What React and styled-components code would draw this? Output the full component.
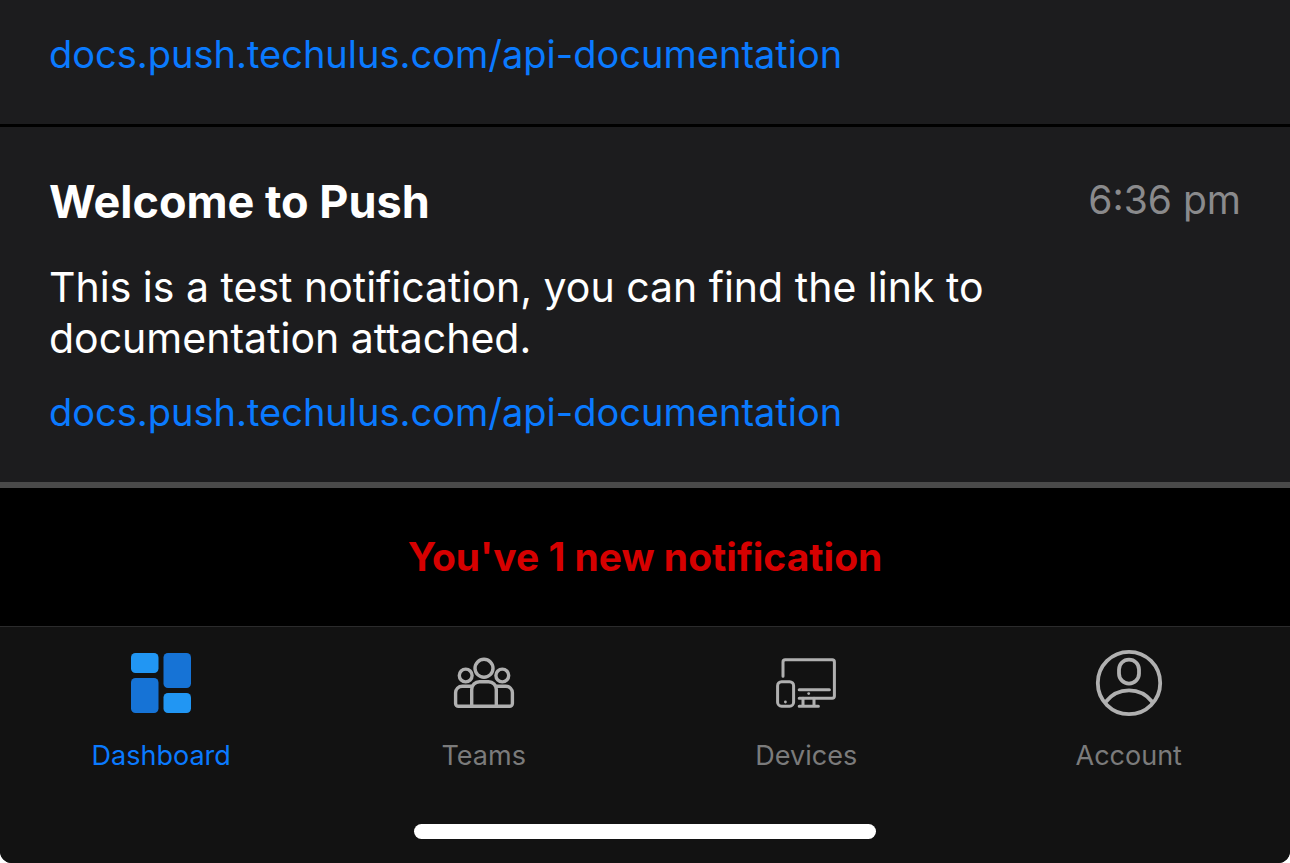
import React, { useState } from "react";
import styled, { createGlobalStyle } from "styled-components";

const GlobalStyle = createGlobalStyle`
  *, *::before, *::after { box-sizing: border-box; }
  body {
    margin: 0;
    background: #ffffff;
    font-family: Inter, "Liberation Sans", sans-serif;
  }
`;

const Screen = styled.div`
  min-height: 100vh;
  display: flex;
  flex-direction: column;
  overflow: hidden;
  background: #000000;
  border-radius: 0 0 12px 12px;
`;

const Feed = styled.main`
  display: flex;
  flex-direction: column;
  gap: 3px;
  border-bottom: 6px solid #4a4a4a;
`;

const Notification = styled.article`
  display: flex;
  flex-direction: column;
  padding: ${({ $continued }) => ($continued ? "30px" : "48px")} 49px 46px;
  background: #1c1c1e;
`;

const Heading = styled.header`
  display: flex;
  justify-content: space-between;
  align-items: flex-start;
  margin-bottom: 33px;
`;

const Title = styled.h2`
  margin: 0;
  font-size: 45px;
  line-height: 54px;
  font-weight: 700;
  color: #ffffff;
`;

const Time = styled.time`
  font-size: 39px;
  line-height: 50px;
  color: #8a8a8c;
`;

const Message = styled.p`
  max-width: 1000px;
  margin: 0 0 24px;
  font-size: 41px;
  line-height: 51px;
  color: #ffffff;
`;

const DocLink = styled.a`
  align-self: flex-start;
  font-size: 38px;
  line-height: 48px;
  color: #0a7aff;
  text-decoration: none;
`;

const Banner = styled.p`
  flex: 1;
  display: flex;
  align-items: center;
  justify-content: center;
  margin: 0;
  padding: 44px 24px;
  font-size: 39px;
  line-height: 50px;
  font-weight: 700;
  color: #d60000;
`;

const Footer = styled.footer`
  display: flex;
  flex-direction: column;
  align-items: center;
  gap: 52px;
  padding: 13px 0 24px;
  border-top: 1px solid #2b2b2c;
  background: #121212;
`;

const TabBar = styled.nav`
  align-self: stretch;
  display: grid;
  grid-template-columns: repeat(4, 1fr);
`;

const Tab = styled.button`
  display: flex;
  flex-direction: column;
  align-items: center;
  gap: 10px;
  padding: 0;
  border: 0;
  background: none;
  font-family: inherit;
  font-size: 27px;
  line-height: 32px;
  color: ${({ $active }) => ($active ? "#0a7aff" : "#7b7b7b")};
  cursor: pointer;
`;

const Icon = styled.svg`
  width: 100px;
  height: 90px;
  fill: none;
  stroke: #b0b0b0;
  stroke-linecap: round;
  stroke-linejoin: round;
`;

const HomeIndicator = styled.div`
  width: 462px;
  max-width: 60%;
  height: 15px;
  border-radius: 8px;
  background: #ffffff;
`;

const DashboardIcon = () => (
  <Icon viewBox="0 0 100 90" aria-hidden="true">
    <g stroke="none">
      <rect x="20" y="13" width="27.5" height="20" rx="4.5" fill="#2196f3" />
      <rect x="52.5" y="13" width="27.5" height="35" rx="4.5" fill="#1673d6" />
      <rect x="20" y="38" width="27.5" height="35" rx="4.5" fill="#1673d6" />
      <rect x="52.5" y="53" width="27.5" height="20" rx="4.5" fill="#2196f3" />
    </g>
  </Icon>
);

const TeamsIcon = () => (
  <Icon viewBox="0 0 100 90" strokeWidth="3.4" aria-hidden="true">
    <circle cx="50" cy="28.3" r="9" />
    <circle cx="31.7" cy="35.5" r="6.4" />
    <circle cx="68.3" cy="35.5" r="6.4" />
    <path d="M37.7 66.3V49.5a7.7 7.7 0 0 1 7.7-7.7h9.2a7.7 7.7 0 0 1 7.7 7.7v16.8" />
    <path d="M37.7 46.2H28.2a6.6 6.6 0 0 0-6.6 6.6v10.6a2.9 2.9 0 0 0 2.9 2.9h51a2.9 2.9 0 0 0 2.9-2.9V52.8a6.6 6.6 0 0 0-6.6-6.6h-9.5" />
  </Icon>
);

const DevicesIcon = () => (
  <Icon viewBox="0 0 100 90" strokeWidth="3" aria-hidden="true">
    <path d="M27 36.2V22a2.2 2.2 0 0 1 2.2-2.2h47a2.2 2.2 0 0 1 2.2 2.2v34a2.2 2.2 0 0 1-2.2 2.2H43.2" />
    <path d="M43.2 49.7h30.2M47 58.2v8M58 58.2v8M43.2 66.2h19.2" />
    <rect x="21.6" y="41.7" width="16" height="24.5" rx="4" />
    <circle cx="52.7" cy="53.6" r="1.4" fill="#b0b0b0" stroke="none" />
    <circle cx="29.4" cy="62" r="1.4" fill="#b0b0b0" stroke="none" />
  </Icon>
);

const AccountIcon = () => (
  <Icon viewBox="0 0 100 90" strokeWidth="3.8" aria-hidden="true">
    <circle cx="50" cy="43" r="31.2" />
    <rect x="40" y="19.6" width="20" height="24" rx="10" />
    <path d="M26.6 62C32.4 54.6 40.6 50.4 50 50.4S67.6 54.6 73.4 62" />
  </Icon>
);

const tabs = [
  { label: "Dashboard", Glyph: DashboardIcon },
  { label: "Teams", Glyph: TeamsIcon },
  { label: "Devices", Glyph: DevicesIcon },
  { label: "Account", Glyph: AccountIcon },
];

const docsPath = "docs.push.techulus.com/api-documentation";

export default function App() {
  const [current, setCurrent] = useState("Dashboard");

  return (
    <>
      <GlobalStyle />
      <Screen>
        <Feed>
          <Notification $continued>
            <DocLink href={`https://${docsPath}`}>{docsPath}</DocLink>
          </Notification>
          <Notification>
            <Heading>
              <Title>Welcome to Push</Title>
              <Time dateTime="18:36">6:36 pm</Time>
            </Heading>
            <Message>
              This is a test notification, you can find the link to documentation attached.
            </Message>
            <DocLink href={`https://${docsPath}`}>{docsPath}</DocLink>
          </Notification>
        </Feed>
        <Banner role="status">You've 1 new notification</Banner>
        <Footer>
          <TabBar aria-label="Main">
            {tabs.map(({ label, Glyph }) => (
              <Tab
                key={label}
                type="button"
                $active={label === current}
                aria-current={label === current ? "page" : undefined}
                onClick={() => setCurrent(label)}
              >
                <Glyph />
                {label}
              </Tab>
            ))}
          </TabBar>
          <HomeIndicator />
        </Footer>
      </Screen>
    </>
  );
}
